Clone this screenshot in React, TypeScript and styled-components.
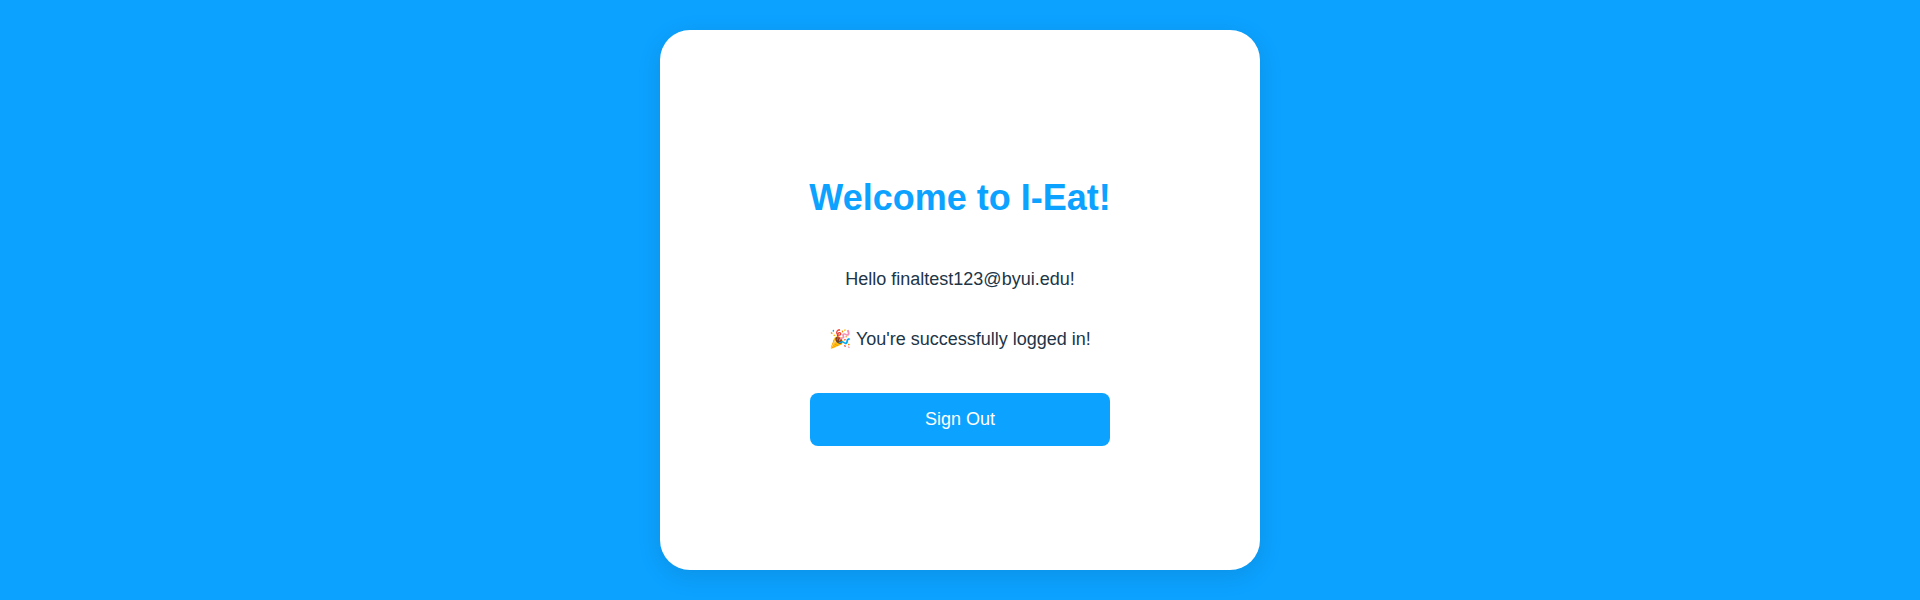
import React from "react";
import styled, { createGlobalStyle } from "styled-components";

const GlobalStyle = createGlobalStyle`
  * { box-sizing: border-box; }
  body {
    margin: 0;
    background: #0ca2ff;
    font-family: "Liberation Sans", Arial, sans-serif;
    color: #213547;
  }
`;

const Page = styled.main`
  display: flex;
  align-items: center;
  justify-content: center;
  height: 600px;
`;

const Card = styled.section`
  display: flex;
  flex-direction: column;
  align-items: center;
  width: 600px;
  height: 540px;
  padding-top: 148px;
  border-radius: 30px;
  background: #fff;
  box-shadow: 0 6px 24px rgba(0, 0, 0, 0.1);
`;

const Title = styled.h1`
  margin: 0 0 51px;
  font-size: 36px;
  line-height: 40px;
  font-weight: 700;
  white-space: nowrap;
  color: #0ca2ff;
`;

const Message = styled.p`
  margin: 0 0 40px;
  font-size: 18px;
  line-height: 20px;
`;

const Button = styled.button`
  width: 300px;
  height: 53px;
  margin-top: 4px;
  border: 0;
  border-radius: 8px;
  background: #0ca2ff;
  color: #fff;
  font: 18px "Liberation Sans", Arial, sans-serif;
  cursor: pointer;
`;

export default function App() {
  return (
    <>
      <GlobalStyle />
      <Page>
        <Card>
          <Title>Welcome to I-Eat!</Title>
          <Message>Hello finaltest123@byui.edu!</Message>
          <Message>🎉 You're successfully logged in!</Message>
          <Button type="button">Sign Out</Button>
        </Card>
      </Page>
    </>
  );
}
